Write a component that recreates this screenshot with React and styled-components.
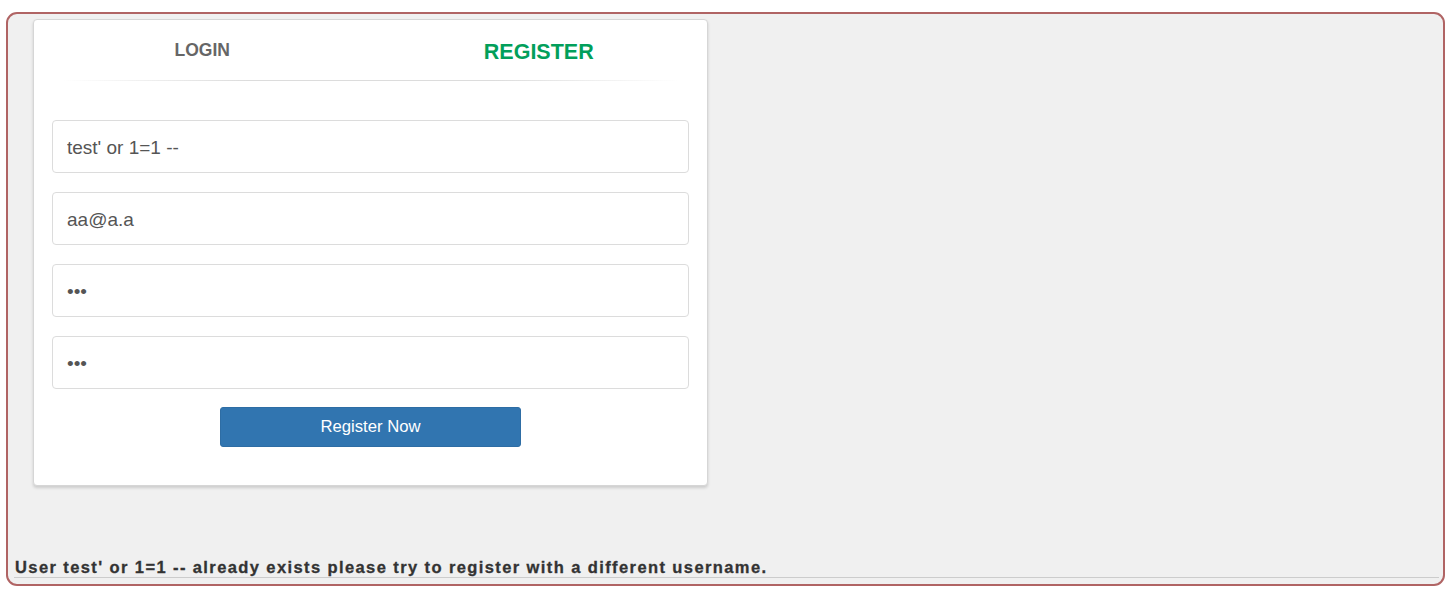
import React, { useState } from 'react';
import styled, { createGlobalStyle } from 'styled-components';

const GlobalStyle = createGlobalStyle`
  html, body {
    margin: 0;
    padding: 0;
    background: #ffffff;
    font-family: "Liberation Sans", Arial, sans-serif;
  }
  * {
    box-sizing: border-box;
  }
`;

const Page = styled.div`
  padding: 12px 5px 7px 6px;
  height: 593px;
`;

const Frame = styled.div`
  height: 574px;
  border: 2px solid #b06464;
  border-radius: 11px;
  background: #f0f0f0;
  display: flex;
  flex-direction: column;
  padding: 5px 4px 6px 6px;
`;

const Card = styled.div`
  width: 675px;
  margin-left: 19px;
  background: #ffffff;
  border: 1px solid #d6d6d6;
  border-radius: 4px;
  box-shadow: 0 2px 3px rgba(0, 0, 0, 0.15);
  padding-bottom: 38px;
`;

const Tabs = styled.div`
  display: grid;
  grid-template-columns: 1fr 1fr;
  height: 61px;
  position: relative;
  margin-bottom: 39px;

  &::after {
    content: '';
    position: absolute;
    left: 28px;
    right: 28px;
    bottom: 0;
    height: 1px;
    background: linear-gradient(to right, rgba(221,221,221,0), #dcdcdc 30%, #dcdcdc 70%, rgba(221,221,221,0));
  }
`;

const Tab = styled.a`
  display: flex;
  justify-content: center;
  align-items: flex-start;
  padding-top: 22px;
  font-weight: bold;
  font-size: ${p => (p.$active ? '21.5px' : '17.5px')};
  color: ${p => (p.$active ? '#029f5b' : '#666666')};
  text-decoration: none;
  cursor: pointer;
  line-height: 1;
`;

const Form = styled.form`
  display: flex;
  flex-direction: column;
  gap: 19px;
  padding: 0 18px;
`;

const Input = styled.input`
  width: 100%;
  height: 53px;
  border: 1px solid #dcdcdc;
  border-radius: 4px;
  padding: 2px 14px 0;
  font-family: "Liberation Sans", Arial, sans-serif;
  font-size: 19px;
  color: #555555;
  background: #ffffff;
  outline: none;
`;

const ButtonRow = styled.div`
  display: flex;
  justify-content: center;
  margin-top: -1px;
`;

const Button = styled.button`
  width: 301px;
  height: 40px;
  background: #3175b0;
  border: 1px solid #2e6da4;
  border-radius: 3px;
  color: #ffffff;
  font-family: "Liberation Sans", Arial, sans-serif;
  font-size: 16.7px;
  cursor: pointer;
`;

const Message = styled.div`
  margin-top: auto;
  padding-left: 1px;
  font-weight: bold;
  font-size: 16.5px;
  letter-spacing: 1.4px;
  -webkit-text-stroke: 0.3px #333333;
  color: #333333;
  line-height: 18px;
  border-bottom: 1px solid #cccccc;
  padding-bottom: 1px;
`;

export default function App() {
  const [tab, setTab] = useState('register');
  const [username, setUsername] = useState("test' or 1=1 --");
  const [email, setEmail] = useState('aa@a.a');
  const [password, setPassword] = useState('aaa');
  const [confirm, setConfirm] = useState('aaa');

  return (
    <>
      <GlobalStyle />
      <Page>
        <Frame>
          <Card>
            <Tabs>
              <Tab $active={tab === 'login'} onClick={() => setTab('login')}>LOGIN</Tab>
              <Tab $active={tab === 'register'} onClick={() => setTab('register')}>REGISTER</Tab>
            </Tabs>
            <Form onSubmit={e => e.preventDefault()}>
              <Input value={username} onChange={e => setUsername(e.target.value)} placeholder="Username" />
              <Input value={email} onChange={e => setEmail(e.target.value)} placeholder="Email Address" />
              <Input type="password" value={password} onChange={e => setPassword(e.target.value)} placeholder="Password" />
              <Input type="password" value={confirm} onChange={e => setConfirm(e.target.value)} placeholder="Confirm Password" />
              <ButtonRow>
                <Button type="submit">Register Now</Button>
              </ButtonRow>
            </Form>
          </Card>
          <Message>User test' or 1=1 -- already exists please try to register with a different username.</Message>
        </Frame>
      </Page>
    </>
  );
}
